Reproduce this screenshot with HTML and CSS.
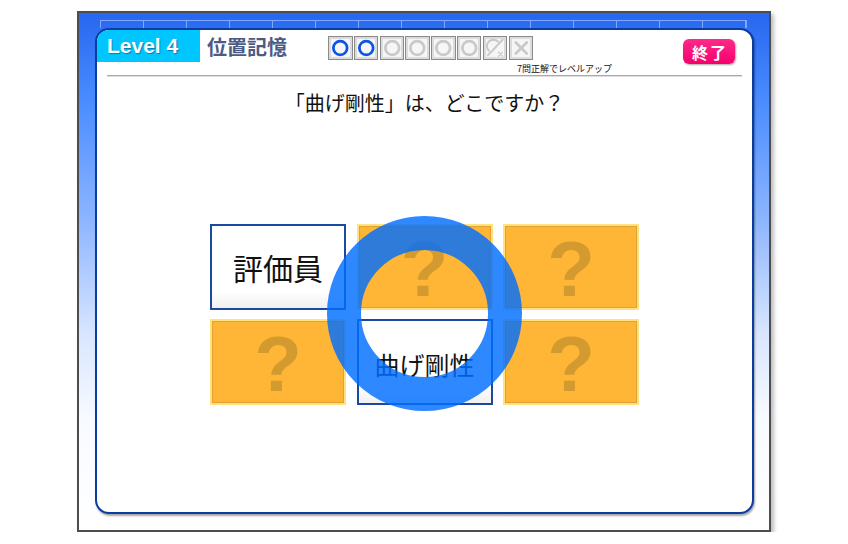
FILE: index.html
```html
<!DOCTYPE html>
<html lang="ja">
  <head>
    <meta charset="UTF-8" />
    <meta name="viewport" content="width=device-width, initial-scale=1.0" />
    <title>位置記憶</title>
    <link rel="stylesheet" href="styles.css">
  </head>
  <body>
    <div class="frame">
      <div class="ruler"></div>
      <div class="panel">
        <div class="header">
          <div class="level">Level 4</div>
          <div class="title">位置記憶</div>
          <div class="score">
            <div class="marks">
              <span class="mark"><svg viewBox="0 0 24 24"><circle cx="12" cy="12" r="7.5" class="ok" /></svg></span>
              <span class="mark"><svg viewBox="0 0 24 24"><circle cx="12" cy="12" r="7.5" class="ok" /></svg></span>
              <span class="mark"><svg viewBox="0 0 24 24"><circle cx="12" cy="12" r="7.5" class="off" /></svg></span>
              <span class="mark"><svg viewBox="0 0 24 24"><circle cx="12" cy="12" r="7.5" class="off" /></svg></span>
              <span class="mark"><svg viewBox="0 0 24 24"><circle cx="12" cy="12" r="7.5" class="off" /></svg></span>
              <span class="mark"><svg viewBox="0 0 24 24"><circle cx="12" cy="12" r="7.5" class="off" /></svg></span>
              <span class="mark"><svg viewBox="0 0 24 24"><path d="M5 15 A7 7 0 0 1 15 5" class="thin" /><path d="M20 3 L4 20" class="thin" /><path d="M15.5 16.5 L20 21 M20 16.5 L15.5 21" class="tiny" /></svg></span>
              <span class="mark"><svg viewBox="0 0 24 24"><path d="M6 6 L18 18 M18 6 L6 18" class="off" /></svg></span>
            </div>
            <div class="note">7問正解でレベルアップ</div>
          </div>
          <button class="quit">終了</button>
        </div>
        <div class="rule"></div>
        <p class="question">「曲げ剛性」は、どこですか？</p>
        <div class="cards">
          <div class="card open big">評価員</div>
          <div class="card hidden">?</div>
          <div class="card hidden">?</div>
          <div class="card hidden">?</div>
          <div class="card open">曲げ剛性</div>
          <div class="card hidden">?</div>
        </div>
        <div class="ring"></div>
      </div>
    </div>
  </body>
</html>
```

FILE: styles.css
```css
body {
  margin: 0;
  background-color: #fff;
  font-family: "Noto Sans CJK JP", "Noto Sans", sans-serif;
}
.frame {
  margin: 11px 0 0 77px;
  width: 694px;
  height: 521px;
  box-sizing: border-box;
  border: 2px solid #4d4d4d;
  box-shadow: 3px 3px 4px rgba(0, 0, 0, 0.25);
  background: linear-gradient(
    #2767f0 0%,
    #4a8cff 17%,
    #8db5ff 40%,
    #d8e6ff 62%,
    #f7faff 78%,
    #fff 100%
  );
  padding-top: 7px;
}
.ruler {
  margin-left: 21px;
  width: 647px;
  height: 8px;
  border-top: 1px solid #7ea9ff;
  border-left: 1px solid #7ea9ff;
  border-right: 1px solid #7ea9ff;
  background: repeating-linear-gradient(
    to right,
    transparent 0,
    transparent 42px,
    #7ea9ff 42px,
    #7ea9ff 43px
  );
  box-sizing: border-box;
}
.panel {
  position: relative;
  margin-left: 16px;
  width: 659px;
  height: 486px;
  box-sizing: border-box;
  border: 2px solid #0b3d9e;
  border-radius: 14px;
  background-color: #fff;
  box-shadow: 1px 2px 2px rgba(0, 0, 0, 0.35);
  overflow: hidden;
}
.header {
  display: flex;
  align-items: flex-start;
  height: 32px;
}
.level {
  width: 103px;
  height: 32px;
  box-sizing: border-box;
  padding-left: 10px;
  display: flex;
  align-items: center;
  background-color: #00c6ff;
  color: #fff;
  font-family: "Liberation Sans", Arial, sans-serif;
  font-weight: bold;
  font-size: 21px;
  text-shadow: 1px 1px 1px rgba(0, 40, 90, 0.45);
}
.title {
  margin-left: 7px;
  padding-top: 1px;
  line-height: 32px;
  font-size: 20px;
  font-weight: bold;
  color: #4b5b85;
}
.score {
  margin-left: 41px;
  margin-top: 6px;
  display: flex;
  flex-direction: column;
}
.marks {
  display: flex;
  gap: 1.3px;
}
.mark {
  width: 24.5px;
  height: 24px;
  box-sizing: border-box;
  border: 1px solid #8a8a8a;
  box-shadow: inset 0 0 0 2px #dcdcdc;
  background-color: #f6f6f6;
  display: flex;
}
.mark svg {
  width: 100%;
  height: 100%;
  fill: none;
  stroke-linecap: round;
}
.mark .ok {
  stroke: #0b54e8;
  stroke-width: 3;
}
.mark .off {
  stroke: #c9c9c9;
  stroke-width: 3;
}
.mark .thin {
  stroke: #c9c9c9;
  stroke-width: 2.2;
}
.mark .tiny {
  stroke: #c9c9c9;
  stroke-width: 1.4;
}
.note {
  margin-top: 4px;
  margin-left: 189px;
  font-size: 9px;
  line-height: 10px;
  white-space: nowrap;
  color: #111;
}
.quit {
  margin-left: auto;
  margin-right: 17px;
  margin-top: 9px;
  width: 52px;
  height: 25px;
  padding: 0;
  border: none;
  border-radius: 6px;
  background: linear-gradient(#ff2a8a, #f5006c);
  box-shadow: 1px 1px 2px rgba(0, 0, 0, 0.35);
  color: #fff;
  font-family: "Noto Sans CJK JP", sans-serif;
  font-weight: bold;
  font-size: 16px;
  letter-spacing: 2px;
  text-indent: 2px;
}
.rule {
  margin: 13px 10px 0;
  height: 1px;
  background-color: #aaa;
  box-shadow: 0 1px 0 #ddd;
}
.question {
  margin: 15px 0 0;
  text-align: center;
  font-size: 20px;
  line-height: 24px;
  color: #111;
}
.cards {
  margin-top: 109px;
  display: grid;
  grid-template-columns: repeat(3, 136px);
  grid-auto-rows: 86px;
  column-gap: 10.5px;
  row-gap: 9px;
  justify-content: center;
}
.card {
  box-sizing: border-box;
  display: flex;
  align-items: center;
  justify-content: center;
}
.card.open {
  border: 2px solid #1a4aa0;
  background: linear-gradient(#fff 80%, #f0f0f0);
  font-size: 25px;
  color: #111;
  padding-top: 4px;
}
.card.open.big {
  font-size: 30px;
  padding-top: 0;
}
.card.hidden {
  border: 2px solid #ffe27e;
  box-shadow: inset 0 0 0 1px #e3a134;
  background-color: #ffb535;
  color: #d39b2f;
  font-family: "Liberation Sans", Arial, sans-serif;
  font-weight: bold;
  font-size: 78px;
  line-height: 1;
  padding-top: 3px;
}
.ring {
  position: absolute;
  left: 230px;
  top: 186px;
  width: 195px;
  height: 195px;
  box-sizing: border-box;
  border: 34px solid rgba(0, 110, 255, 0.82);
  border-radius: 50%;
}
```
